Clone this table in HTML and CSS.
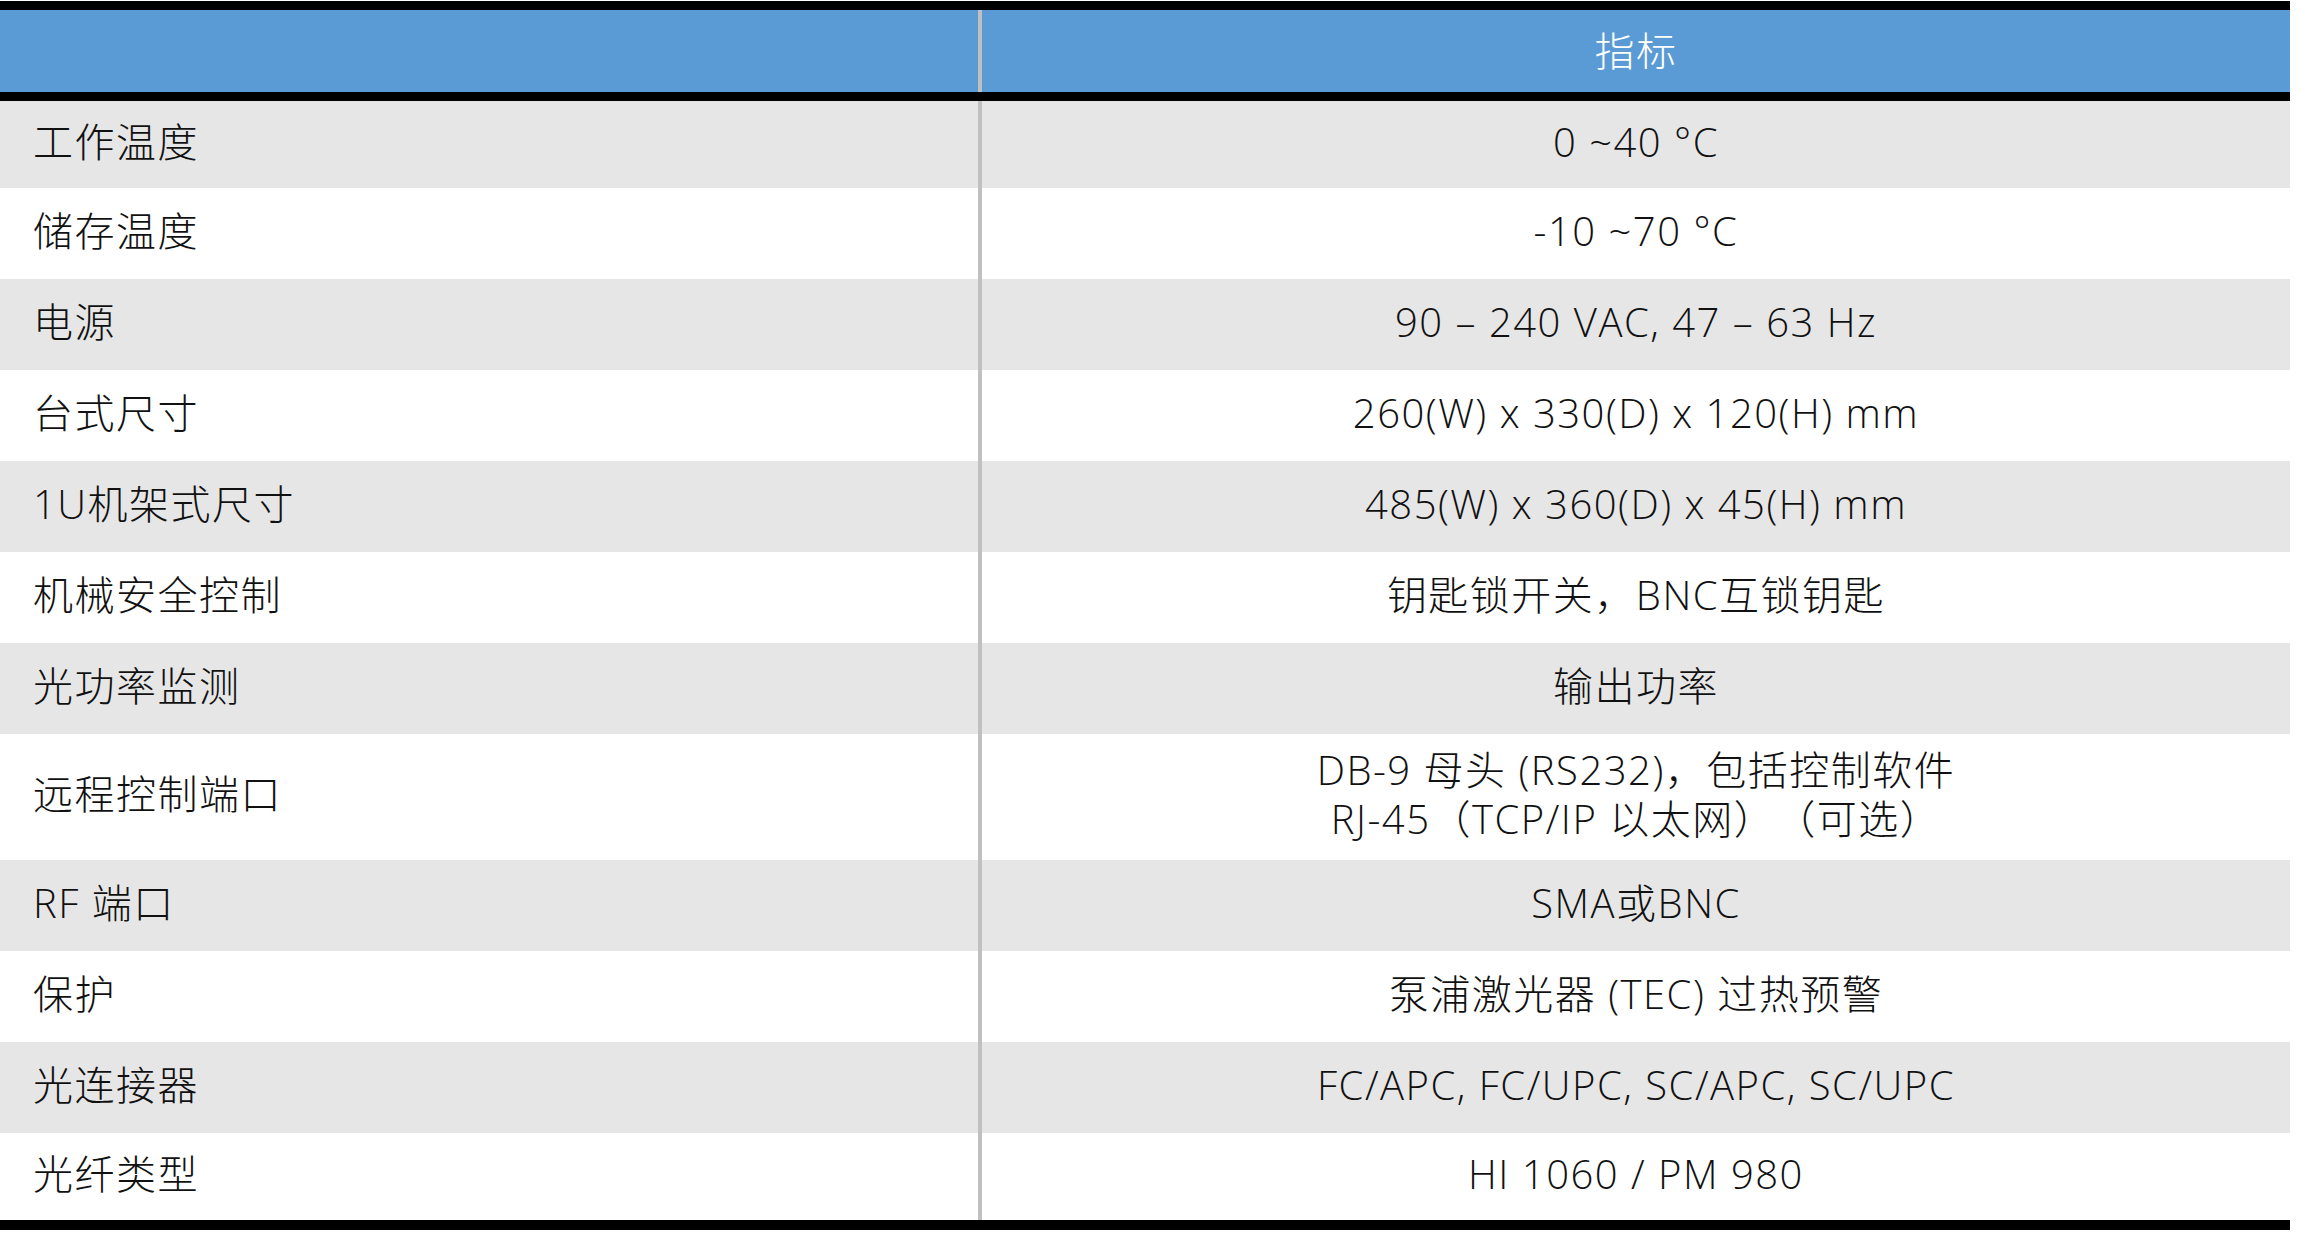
FILE: index.html
```html
<!DOCTYPE html>
<html lang="zh-CN">
<head>
<meta charset="utf-8">
<title>规格</title>
<link rel="stylesheet" href="styles.css">
</head>
<body>
<div class="spec">
  <div class="row head">
    <div class="cell name"></div>
    <div class="cell val">指标</div>
  </div>
  <div class="row odd first">
    <div class="cell name">工作温度</div>
    <div class="cell val">0 ~40 °C</div>
  </div>
  <div class="row even">
    <div class="cell name">储存温度</div>
    <div class="cell val">-10 ~70 °C</div>
  </div>
  <div class="row odd">
    <div class="cell name">电源</div>
    <div class="cell val">90 – 240 VAC, 47 – 63 Hz</div>
  </div>
  <div class="row even">
    <div class="cell name">台式尺寸</div>
    <div class="cell val">260(W) x 330(D) x 120(H) mm</div>
  </div>
  <div class="row odd">
    <div class="cell name">1U机架式尺寸</div>
    <div class="cell val">485(W) x 360(D) x 45(H) mm</div>
  </div>
  <div class="row even">
    <div class="cell name">机械安全控制</div>
    <div class="cell val">钥匙锁开关，BNC互锁钥匙</div>
  </div>
  <div class="row odd">
    <div class="cell name">光功率监测</div>
    <div class="cell val">输出功率</div>
  </div>
  <div class="row even tall">
    <div class="cell name">远程控制端口</div>
    <div class="cell val two"><span>DB-9 母头 (RS232)，包括控制软件</span><span>RJ-45（TCP/IP 以太网）（可选）</span></div>
  </div>
  <div class="row odd">
    <div class="cell name">RF 端口</div>
    <div class="cell val">SMA或BNC</div>
  </div>
  <div class="row even">
    <div class="cell name">保护</div>
    <div class="cell val">泵浦激光器 (TEC) 过热预警</div>
  </div>
  <div class="row odd">
    <div class="cell name">光连接器</div>
    <div class="cell val">FC/APC, FC/UPC, SC/APC, SC/UPC</div>
  </div>
  <div class="row even last">
    <div class="cell name">光纤类型</div>
    <div class="cell val">HI 1060 / PM 980</div>
  </div>
</div>
</body>
</html>
```
FILE: styles.css
```css
html, body {
  margin: 0;
  padding: 0;
  background: #ffffff;
}
body {
  padding-top: 1px;
  font-family: "Open Sans", "Noto Sans CJK SC", sans-serif;
  font-weight: 300;
  color: #111111;
  text-spacing-trim: space-all;
}
.spec {
  width: 2290px;
  display: flex;
  flex-direction: column;
}
.row {
  display: grid;
  grid-template-columns: 982px 1308px;
  height: 91px;
}
.row.first { height: 87px; }
.row.last {
  height: 87px;
  border-bottom: 10px solid #000000;
}
.row.tall { height: 126px; }
.odd { background: #e6e6e6; }
.even { background: #ffffff; }
.head {
  height: 82px;
  background: #5b9bd5;
  border-top: 9px solid #000000;
  border-bottom: 9px solid #000000;
}
.cell {
  display: flex;
  align-items: center;
  font-size: 40px;
  line-height: 48px;
  letter-spacing: 1.5px;
}
.odd .cell,
.even .cell {
  padding-bottom: 6px;
}
.name {
  padding-left: 33px;
  border-right: 4px solid #c0c0c0;
}
.val {
  justify-content: center;
  text-align: center;
}
.head .val {
  color: #ffffff;
}
.two {
  flex-direction: column;
  justify-content: center;
  align-items: center;
}
.two span {
  display: block;
  line-height: 49px;
}
```
